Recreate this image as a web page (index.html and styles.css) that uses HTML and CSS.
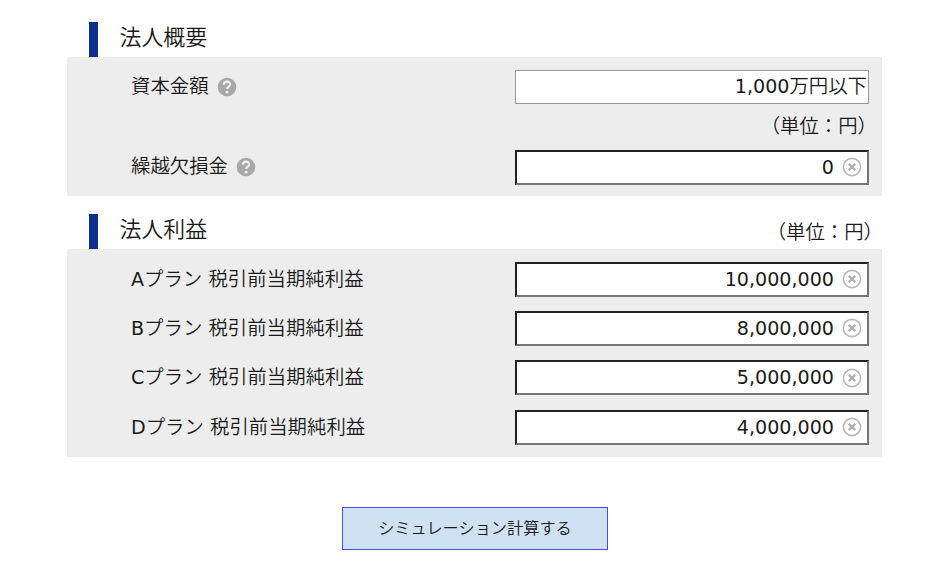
FILE: index.html
```
<!DOCTYPE html>
<html lang="ja">
<head>
    <meta charset="UTF-8">
    <meta name="viewport" content="width=device-width, initial-scale=1.0">
    <title>シミュレーション</title>
    <link rel="stylesheet" href="styles.css">
</head>
<body>
    <svg class="sprite" width="0" height="0">
        <symbol id="help" viewBox="0 0 20 20">
            <circle cx="10" cy="10" r="9.3" fill="#a8a8a8"/>
            <path d="M6.8 7.7C6.9 3.7 13.2 3.7 13.2 7.4C13.2 9.7 10.2 9.7 10.2 12.1" fill="none" stroke="#eee" stroke-width="2.1"/>
            <circle cx="10.1" cy="15.2" r="1.4" fill="#eee"/>
        </symbol>
        <symbol id="clear" viewBox="0 0 20 20">
            <circle cx="10" cy="10" r="8.6" fill="none" stroke="#bababa" stroke-width="1.6"/>
            <path d="M6.8 6.8L13.2 13.2M13.2 6.8L6.8 13.2" stroke="#b0b0b0" stroke-width="2.5"/>
        </symbol>
    </svg>
    <form class="container">
        <div class="heading">
            <h2>法人概要</h2>
        </div>
        <div class="panel">
            <div class="row">
                <label>資本金額</label>
                <svg class="help-icon"><use href="#help"/></svg>
                <div class="field select-field"><span class="latin">1,000</span>万円以下</div>
            </div>
            <p class="unit">（単位：円）</p>
            <div class="row">
                <label for="loss">繰越欠損金</label>
                <svg class="help-icon"><use href="#help"/></svg>
                <div class="field">
                    <input type="text" id="loss" value="0">
                    <svg class="clear-icon"><use href="#clear"/></svg>
                </div>
            </div>
        </div>

        <div class="heading">
            <h2>法人利益</h2>
            <p class="heading-unit">（単位：円）</p>
        </div>
        <div class="panel profit">
            <div class="row">
                <label for="planA"><span class="latin">A</span>プラン 税引前当期純利益</label>
                <div class="field">
                    <input type="text" id="planA" value="10,000,000">
                    <svg class="clear-icon"><use href="#clear"/></svg>
                </div>
            </div>
            <div class="row">
                <label for="planB"><span class="latin">B</span>プラン 税引前当期純利益</label>
                <div class="field">
                    <input type="text" id="planB" value="8,000,000">
                    <svg class="clear-icon"><use href="#clear"/></svg>
                </div>
            </div>
            <div class="row">
                <label for="planC"><span class="latin">C</span>プラン 税引前当期純利益</label>
                <div class="field">
                    <input type="text" id="planC" value="5,000,000">
                    <svg class="clear-icon"><use href="#clear"/></svg>
                </div>
            </div>
            <div class="row">
                <label for="planD"><span class="latin">D</span>プラン 税引前当期純利益</label>
                <div class="field">
                    <input type="text" id="planD" value="4,000,000">
                    <svg class="clear-icon"><use href="#clear"/></svg>
                </div>
            </div>
        </div>
        <button type="button" class="calc-button">シミュレーション計算する</button>
    </form>
</body>
</html>
```

FILE: styles.css
```
* {
    box-sizing: border-box;
}

body {
    margin: 0;
    background: #fff;
    color: #1a1a1a;
    font-family: "DejaVu Sans", "Noto Sans CJK JP", sans-serif;
    font-size: 19.4px;
    font-weight: 350;
}

h2, p {
    margin: 0;
    font-weight: 350;
}

.latin {
    font-size: 19.1px;
    font-weight: 400;
}

.sprite {
    position: absolute;
}

.container {
    width: 815px;
    margin-left: 67px;
    padding-top: 22px;
}

.heading {
    display: flex;
    justify-content: space-between;
    height: 35px;
    margin-left: 22px;
    border-left: 9px solid #0b2e91;
}

.heading h2 {
    padding-left: 21.5px;
    font-size: 21.9px;
    line-height: 31px;
}

.heading-unit {
    margin-right: -1px;
    line-height: 37px;
}

.panel {
    height: 139px;
    margin-bottom: 18px;
    padding: 13px 13px 0 64px;
    background: #ededed;
}

.profit {
    display: flex;
    flex-direction: column;
    gap: 15.4px;
    height: 208px;
    margin-bottom: 50px;
}

.row {
    display: flex;
    align-items: center;
    height: 34px;
}

.row label {
    line-height: 34px;
}

.profit label {
    padding-top: 1px;
}

.help-icon {
    width: 20px;
    height: 20px;
    margin-left: 8px;
}

.field {
    display: flex;
    align-items: center;
    width: 354px;
    height: 35px;
    margin-left: auto;
    border: 2px solid #767676;
    border-top-color: #222;
    border-left-color: #222;
    background: #fff;
}

.select-field {
    justify-content: flex-end;
    height: 34px;
    padding-right: 1px;
    border: 1px solid #999;
    line-height: 32px;
}

.field input {
    flex: 1;
    min-width: 0;
    height: 100%;
    padding: 0;
    border: none;
    outline: none;
    background: none;
    color: inherit;
    font-family: inherit;
    font-size: 19.1px;
    font-weight: 400;
    text-align: right;
}

.clear-icon {
    width: 20px;
    height: 20px;
    margin: 0 5px 0 8px;
}

.unit {
    height: 46px;
    margin-right: -8px;
    line-height: 45px;
    text-align: right;
}

.calc-button {
    display: block;
    width: 266px;
    height: 43px;
    margin-left: 275px;
    padding: 0 0 4px;
    border: 1px solid #4a4aff;
    background: #cfe2f3;
    color: #1a1a1a;
    font-family: inherit;
    font-size: 16.2px;
    font-weight: 350;
}
```
